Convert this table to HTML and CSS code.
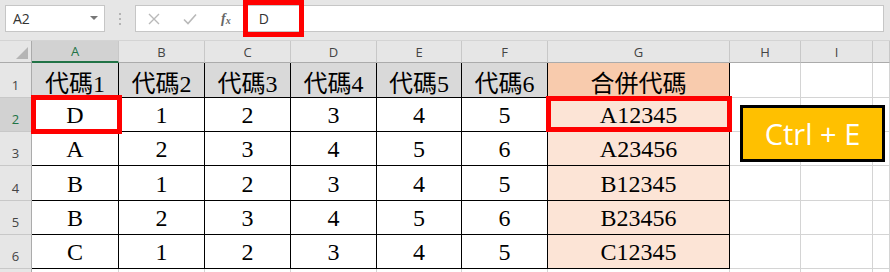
FILE: index.html
```html
<!DOCTYPE html>
<html lang="zh-Hant">
<head>
    <meta charset="UTF-8">
    <title>合併代碼 - Ctrl + E</title>
    <link rel="stylesheet" href="styles.css">
</head>
<body>
    <div class="app">
        <!-- name box + formula bar -->
        <div class="toolbar">
            <div class="namebox">
                <span>A2</span>
                <span class="caret"></span>
            </div>
            <svg class="grip" width="4" height="14" viewBox="0 0 4 14">
                <rect x="1" y="1" width="2" height="2" fill="#b4b4b4"/>
                <rect x="1" y="6" width="2" height="2" fill="#b4b4b4"/>
                <rect x="1" y="11" width="2" height="2" fill="#b4b4b4"/>
            </svg>
            <div class="formula">
                <svg class="fbtn" width="12" height="12" viewBox="0 0 12 12">
                    <path d="M1 1 L11 11 M11 1 L1 11" stroke="#b9b9b9" stroke-width="1.4" fill="none"/>
                </svg>
                <svg class="fbtn ok" width="14" height="12" viewBox="0 0 14 12">
                    <path d="M1 6.5 L5 10.5 L13 1.5" stroke="#b9b9b9" stroke-width="1.6" fill="none"/>
                </svg>
                <span class="fx">f<sub>x</sub></span>
                <span class="fvalue">D</span>
                <div class="bar-mark"></div>
            </div>
        </div>

        <!-- sheet grid -->
        <div class="sheet">
            <div class="corner"><span class="selall"></span></div>
            <div class="hd sel">A</div>
            <div class="hd">B</div>
            <div class="hd">C</div>
            <div class="hd">D</div>
            <div class="hd">E</div>
            <div class="hd">F</div>
            <div class="hd">G</div>
            <div class="hd">H</div>
            <div class="hd">I</div>
            <div class="hd"></div>

            <div class="rh">1</div>
            <div class="t title">代碼1</div>
            <div class="t title">代碼2</div>
            <div class="t title">代碼3</div>
            <div class="t title">代碼4</div>
            <div class="t title">代碼5</div>
            <div class="t title">代碼6</div>
            <div class="t gtitle">合併代碼</div>
            <div class="c"></div>
            <div class="c"></div>
            <div class="c"></div>

            <div class="rh sel">2</div>
            <div class="t mark mark-a">D</div>
            <div class="t">1</div>
            <div class="t">2</div>
            <div class="t">3</div>
            <div class="t">4</div>
            <div class="t">5</div>
            <div class="t g mark mark-g">A12345</div>
            <div class="c"></div>
            <div class="c"></div>
            <div class="c"></div>

            <div class="rh">3</div>
            <div class="t">A</div>
            <div class="t">2</div>
            <div class="t">3</div>
            <div class="t">4</div>
            <div class="t">5</div>
            <div class="t">6</div>
            <div class="t g">A23456</div>
            <div class="c"></div>
            <div class="c"></div>
            <div class="c"></div>

            <div class="rh">4</div>
            <div class="t">B</div>
            <div class="t">1</div>
            <div class="t">2</div>
            <div class="t">3</div>
            <div class="t">4</div>
            <div class="t">5</div>
            <div class="t g">B12345</div>
            <div class="c"></div>
            <div class="c"></div>
            <div class="c"></div>

            <div class="rh">5</div>
            <div class="t">B</div>
            <div class="t">2</div>
            <div class="t">3</div>
            <div class="t">4</div>
            <div class="t">5</div>
            <div class="t">6</div>
            <div class="t g">B23456</div>
            <div class="c"></div>
            <div class="c"></div>
            <div class="c"></div>

            <div class="rh">6</div>
            <div class="t">C</div>
            <div class="t">1</div>
            <div class="t">2</div>
            <div class="t">3</div>
            <div class="t">4</div>
            <div class="t">5</div>
            <div class="t g">C12345</div>
            <div class="c"></div>
            <div class="c"></div>
            <div class="c"></div>

            <!-- top sliver of the next row -->
            <div class="rh"></div>
            <div class="c"></div>
            <div class="c"></div>
            <div class="c"></div>
            <div class="c"></div>
            <div class="c"></div>
            <div class="c"></div>
            <div class="c"></div>
            <div class="c"></div>
            <div class="c"></div>
            <div class="c"></div>

            <!-- shortcut badge floating over the sheet -->
            <div class="badge">Ctrl + E</div>
        </div>
    </div>
</body>
</html>
```

FILE: styles.css
```css
/* Global */
* {
    box-sizing: border-box;
}
body {
    margin: 0;
    background: #fff;
    font-family: "Open Sans", "Noto Sans", sans-serif;
    overflow: hidden;
}
.app {
    width: 890px;
    height: 272px;
    overflow: hidden;
}

/* Toolbar: name box + formula bar */
.toolbar {
    height: 41px;
    background: #e6e6e6;
    display: flex;
    align-items: flex-start;
    padding: 5px 0 0 5px;
    border-bottom: 1px solid #d4d4d4;
}
.namebox {
    width: 100px;
    height: 27px;
    background: #fff;
    border: 1px solid #c6c6c6;
    display: flex;
    align-items: center;
    justify-content: space-between;
    padding: 0 6px 0 7px;
    font-size: 14px;
    color: #333;
}
.caret {
    width: 0;
    height: 0;
    border-left: 4px solid transparent;
    border-right: 4px solid transparent;
    border-top: 4px solid #777;
    margin-top: -2px;
}
.grip {
    margin: 7px 13px 0 13px;
}
.formula {
    position: relative;
    flex: 1;
    height: 27px;
    margin-right: 6px;
    background: #fff;
    border: 1px solid #c6c6c6;
    display: flex;
    align-items: center;
    padding-left: 12px;
    font-size: 14px;
    color: #333;
}
.fbtn {
    margin-right: 23px;
}
.fbtn.ok {
    margin-right: 24px;
}
.fx {
    font-family: "Liberation Serif", serif;
    font-style: italic;
    font-weight: bold;
    font-size: 14px;
    color: #666;
    margin-right: 28px;
}
.fx sub {
    font-size: 10px;
    vertical-align: -1px;
}
.bar-mark {
    position: absolute;
    left: 107px;
    top: -6px;
    width: 61px;
    height: 37px;
    border: 5px solid #f00;
}

/* Sheet grid */
.sheet {
    position: relative;
    display: grid;
    grid-template-columns: 32px 87px 86px 86px 86px 85px 86px 182px 71px 72px 1fr;
    grid-template-rows: 22px 35px 34px 34px 35px 34px 34px 20px;
}
.corner {
    background: #e6e6e6;
    border-right: 1px solid #ababab;
    border-bottom: 1px solid #ababab;
    position: relative;
}
.selall {
    position: absolute;
    right: 3px;
    bottom: 3px;
    width: 0;
    height: 0;
    border-left: 12px solid transparent;
    border-bottom: 12px solid #b5b5b5;
}
.hd {
    background: #e6e6e6;
    border-right: 1px solid #c8c8c8;
    border-bottom: 1px solid #ababab;
    display: flex;
    align-items: center;
    justify-content: center;
    font-size: 13px;
    color: #444;
}
.hd.sel {
    background: #d2d2d2;
    border-bottom: 2px solid #217346;
    color: #217346;
}
.rh {
    background: #e6e6e6;
    border-right: 1px solid #ababab;
    border-bottom: 1px solid #c8c8c8;
    display: flex;
    align-items: flex-end;
    justify-content: center;
    padding-bottom: 3px;
    font-size: 13px;
    color: #444;
}
.rh.sel {
    background: #d2d2d2;
    color: #217346;
}

/* Cells */
.c {
    border-right: 1px solid #d4d4d4;
    border-bottom: 1px solid #d4d4d4;
}
.t {
    border-right: 1px solid #000;
    border-bottom: 1px solid #000;
    display: flex;
    align-items: center;
    justify-content: center;
    padding-top: 2px;
    font-family: "Liberation Serif", "Noto Sans CJK TC", serif;
    font-size: 24px;
    color: #000;
}
.t.title {
    background: #d9d9d9;
}
.t.gtitle {
    background: #f8cbad;
}
.t.g {
    background: #fce4d6;
}

/* Red highlight frames */
.mark {
    position: relative;
}
.mark::after {
    content: "";
    position: absolute;
    border: 5px solid #f00;
}
.mark-a::after {
    left: -1px;
    right: -4px;
    top: -3px;
    bottom: -3px;
}
.mark-g::after {
    left: -2px;
    right: -3px;
    top: -2px;
    bottom: -1px;
}

/* Shortcut badge */
.badge {
    position: absolute;
    left: 740px;
    top: 64px;
    width: 145px;
    height: 57px;
    background: #ffc000;
    border: 3px solid #000;
    display: flex;
    align-items: center;
    justify-content: center;
    font-size: 29px;
    color: #fff;
}
```
